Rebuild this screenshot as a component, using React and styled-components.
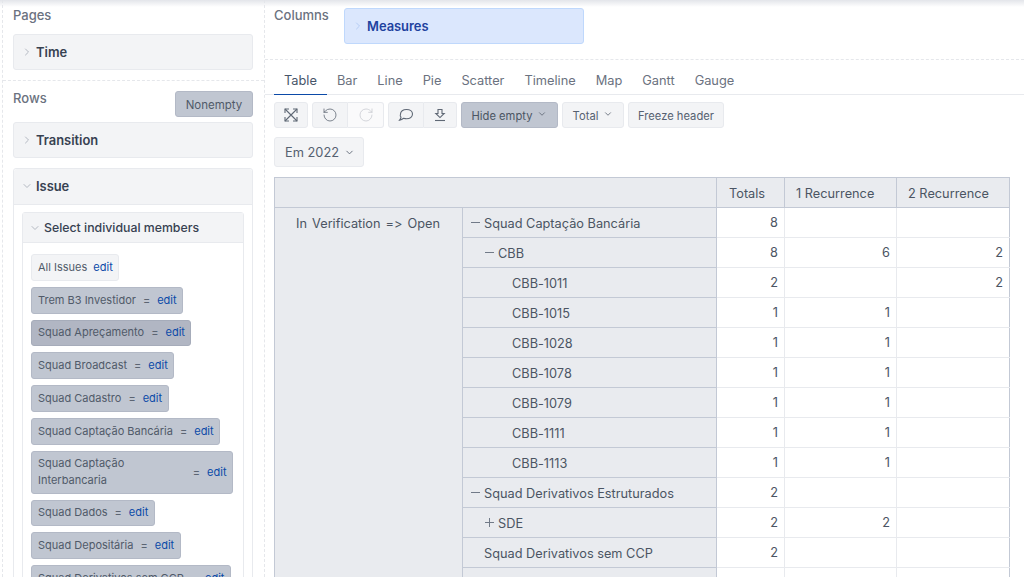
import React from 'react';
import styled, { createGlobalStyle } from 'styled-components';
import { ChevronRight, ChevronDown, RotateCcw, RotateCw } from 'lucide-react';

const GlobalStyle = createGlobalStyle`
  html, body {
    margin: 0;
    padding: 0;
    background: #fff;
    font-family: Inter, "Noto Sans", sans-serif;
    font-variant-ligatures: none;
    font-feature-settings: "liga" 0, "calt" 0;
    color: #4b5563;
  }
  * { box-sizing: border-box; }
`;

const Page = styled.div`
  position: relative;
  display: flex;
  width: 1024px;
  height: 577px;
  overflow: hidden;
  background: #fff;
`;

const TopShadow = styled.div`
  position: absolute;
  top: 0;
  left: 0;
  right: 0;
  height: 7px;
  background: linear-gradient(#e3e5ea, #ffffff00);
`;

const Sidebar = styled.aside`
  flex: none;
  width: 263px;
  margin-left: 2px;
  border-left: 1px dashed #e5e7eb;
  border-right: 1px dashed #e5e7eb;
`;

const Section = styled.section`
  padding: ${(p) => p.$pad || '8px 11px 10px 10px'};
  border-bottom: ${(p) => (p.$line ? '1px dashed #e5e7eb' : 'none')};
`;

const SectionHead = styled.div`
  display: flex;
  justify-content: space-between;
  align-items: flex-start;
  height: 27px;
  margin-bottom: 4px;
`;

const Label = styled.div`
  font-size: 13px;
  line-height: 14px;
  color: #6b7280;
  font-weight: 500;
`;

const Dim = styled.div`
  display: flex;
  align-items: center;
  gap: 3px;
  height: ${(p) => p.$h || 36}px;
  margin-top: ${(p) => p.$mt || 0}px;
  margin-bottom: ${(p) => p.$mb || 0}px;
  padding-left: 7px;
  background: ${(p) => (p.$blue ? '#dbe7fd' : '#f3f4f6')};
  border: 1px solid ${(p) => (p.$blue ? '#bfd8fc' : '#e8eaee')};
  border-radius: 3px;
  font-size: 12.9px;
  font-weight: 600;
  color: ${(p) => (p.$blue ? '#1e429f' : '#374151')};
  svg { color: ${(p) => (p.$blue ? '#b6cdf5' : '#b4b9c2')}; flex: none; }
`;

const IssueCard = styled.div`
  border: 1px solid #e8eaee;
  border-radius: 3px;
  height: 500px;
`;

const IssueHead = styled(Dim)`
  border: none;
  border-bottom: 1px solid #e8eaee;
  border-radius: 3px 3px 0 0;
  padding-bottom: 1px;
`;

const Members = styled.div`
  margin: 7px 8px 0;
  border: 1px solid #e8eaee;
  border-radius: 3px;
  height: 500px;
`;

const MembersHead = styled.div`
  display: flex;
  align-items: center;
  gap: 3px;
  height: 30px;
  padding-left: 6px;
  background: #f3f4f6;
  border-bottom: 1px solid #e8eaee;
  font-size: 12.3px;
  font-weight: 500;
  color: #374151;
  svg { color: #b4b9c2; flex: none; }
`;

const MemberList = styled.div`
  display: flex;
  flex-direction: column;
  align-items: flex-start;
  gap: 6px;
  padding: 11px 8px;
`;

const Chip = styled.div`
  display: flex;
  align-items: center;
  min-height: 26.75px;
  width: ${(p) => (p.$wide ? '202px' : 'auto')};
  padding: 3.5px 5.5px 3.5px 6px;
  border: 1px solid ${(p) => (p.$plain ? '#e8eaee' : p.$dark ? '#a6acba' : '#b3b9c6')};
  border-radius: 3px;
  background: ${(p) => (p.$plain ? '#f3f4f6' : p.$dark ? '#b1b6c3' : '#c0c6d1')};
  font-size: 11px;
  line-height: 17px;
  color: #505a69;
`;

const ChipName = styled.span`
  flex: none;
  max-width: ${(p) => (p.$wide ? '120px' : 'none')};
`;

const Eq = styled.span`
  margin: ${(p) => (p.$push ? '0 7px 0 auto' : '0 7px')};
  color: #5b6472;
`;

const Edit = styled.a`
  color: #0b4aa8;
  margin-left: ${(p) => (p.$gap ? '6px' : '0')};
`;

const Nonempty = styled.button`
  width: 78px;
  height: 26px;
  padding: 1px 0 0;
  font: inherit;
  font-size: 11.5px;
  color: #505a69;
  background: #c0c6d1;
  border: 1px solid #b3b9c6;
  border-radius: 3px;
`;

const Main = styled.main`
  flex: 1;
  min-width: 0;
`;

const ColumnsBar = styled.div`
  display: flex;
  gap: 14px;
  height: 60px;
  padding: 8px 9px 0;
  border-bottom: 1px dashed #e5e7eb;
`;

const ColumnsLabel = styled(Label)`
  width: 56px;
`;

const Measures = styled(Dim)`
  width: 240px;
`;

const Tabs = styled.nav`
  display: flex;
  height: 35px;
  padding: 0 9px;
  border-bottom: 1px solid #e8eaee;
`;

const Tab = styled.div`
  height: 35px;
  padding: 13px 10px 0;
  font-size: 12.8px;
  line-height: 16px;
  color: ${(p) => (p.$on ? '#475569' : '#6b7280')};
  border-bottom: 1px solid ${(p) => (p.$on ? '#0b4aa8' : 'transparent')};
`;

const Toolbar = styled.div`
  display: flex;
  gap: 4px;
  padding: 7px 9px 0;
`;

const Group = styled.div`
  display: flex;
`;

const ToolButton = styled.button`
  display: flex;
  align-items: center;
  justify-content: center;
  gap: 5px;
  height: 26px;
  width: ${(p) => p.$w}px;
  padding: ${(p) => (p.$text ? '1px 0 0' : '0')};
  font: inherit;
  font-size: 11.2px;
  white-space: nowrap;
  color: ${(p) => (p.$on ? '#4b5563' : '#566171')};
  background: ${(p) => (p.$on ? '#c0c6d1' : p.$off ? '#fafafb' : '#f3f4f6')};
  border: 1px solid ${(p) => (p.$on ? '#b3b9c6' : '#e8eaee')};
  border-radius: ${(p) => (p.$first ? '3px 0 0 3px' : p.$last ? '0 3px 3px 0' : '3px')};
  border-left-width: ${(p) => (p.$last ? 0 : 1)}px;
  svg { flex: none; color: ${(p) => (p.$off ? '#c9ccd2' : '#5f6875')}; }
`;

const Caret = styled(ChevronDown)`
  transform: translateY(-2px);
`;

const YearButton = styled(ToolButton)`
  gap: 5px;
  height: 30px;
  margin: 9px 0 10px 9px;
  padding-left: 2px;
  font-size: 12.8px;
`;

const Grid = styled.table`
  width: 736px;
  margin-left: 9px;
  border-collapse: collapse;
  table-layout: fixed;
  border-top: 1px solid #c3c9d5;
  border-left: 1px solid #c3c9d5;
  border-right: 1px solid #c3c9d5;
  font-size: 12.75px;
  color: #4b5563;
`;

const HeadCell = styled.th`
  height: 30px;
  padding: 1px 0 0 ${(p) => p.$pl || 0}px;
  background: #e9ebef;
  font-weight: 400;
  text-align: left;
  border-left: 1px solid #c3c9d5;
  border-bottom: 1px solid #c3c9d5;
`;

const GroupCell = styled.td`
  vertical-align: top;
  padding: 8px 0 0 21px;
  background: #e9ebef;
  border-bottom: 1px solid #c3c9d5;
  line-height: 16px;
  word-spacing: 1.5px;
`;

const RowCell = styled.td`
  height: 30px;
  padding: 1px 0 0;
  background: #e9ebef;
  border-left: 1px solid #c3c9d5;
  border-bottom: 1px solid #c3c9d5;
`;

const RowName = styled.div`
  display: flex;
  align-items: center;
  padding-left: ${(p) => 8 + p.$level * 14}px;
`;

const Toggle = styled.span`
  display: inline-flex;
  width: 13px;
  flex: none;
  transform: translateY(-1px);
  svg { display: block; color: #717a88; }
`;

const Value = styled.td`
  height: 30px;
  padding: 0 6px 0 0;
  text-align: right;
  background: #fff;
  border-left: 1px solid ${(p) => (p.$first ? '#c3c9d5' : '#e8eaee')};
  border-bottom: 1px solid #e8eaee;
`;

const FullScreen = () => (
  <svg width="14" height="14" viewBox="0 0 14 14" fill="none" stroke="currentColor" strokeWidth="1.1">
    <path d="M1 1l12 12M13 1L1 13" />
    <path d="M1 5V1h4M9 1h4v4M1 9v4h4M13 9v4H9" />
  </svg>
);

const Download = () => (
  <svg width="14" height="14" viewBox="0 0 14 14" fill="none" stroke="currentColor" strokeWidth="1.1">
    <path d="M5 1.500h4v4h2.200L7 9.600 2.800 5.500H5z" />
    <path d="M2 12.500h10" />
  </svg>
);

const Comment = () => (
  <svg width="16" height="15" viewBox="0 0 16 15" fill="none" stroke="currentColor" strokeWidth="1.1">
    <path d="M8.500 1.500c3.500 0 6 1.900 6 4.600s-2.600 4.700-6 4.700c-1 0-2-.2-2.900-.5-1 .8-2.300 1.600-4 1.900.7-.9 1.300-2 1.400-3.100C1.700 8.300 2 7.400 2.500 6.100 2.500 3.400 5 1.500 8.500 1.500z" />
  </svg>
);

const Minus = () => (
  <svg width="9" height="9" viewBox="0 0 9 9" stroke="currentColor" strokeWidth="1">
    <path d="M0 4.500h9" />
  </svg>
);

const Plus = () => (
  <svg width="9" height="9" viewBox="0 0 9 9" stroke="currentColor" strokeWidth="1">
    <path d="M0 4.500h9M4.500 0v9" />
  </svg>
);

const members = [
  { name: 'Trem B3 Investidor' },
  { name: 'Squad Apreçamento', dark: true },
  { name: 'Squad Broadcast' },
  { name: 'Squad Cadastro' },
  { name: 'Squad Captação Bancária' },
  { name: 'Squad Captação Interbancaria', wide: true },
  { name: 'Squad Dados' },
  { name: 'Squad Depositária' },
  { name: 'Squad Derivativos sem CCP' },
];

const rows = [
  { name: 'Squad Captação Bancária', level: 0, mark: 'minus', v: [8, '', ''] },
  { name: 'CBB', level: 1, mark: 'minus', v: [8, 6, 2] },
  { name: 'CBB-1011', level: 2, v: [2, '', 2] },
  { name: 'CBB-1015', level: 2, v: [1, 1, ''] },
  { name: 'CBB-1028', level: 2, v: [1, 1, ''] },
  { name: 'CBB-1078', level: 2, v: [1, 1, ''] },
  { name: 'CBB-1079', level: 2, v: [1, 1, ''] },
  { name: 'CBB-1111', level: 2, v: [1, 1, ''] },
  { name: 'CBB-1113', level: 2, v: [1, 1, ''] },
  { name: 'Squad Derivativos Estruturados', level: 0, mark: 'minus', v: [2, '', ''] },
  { name: 'SDE', level: 1, mark: 'plus', v: [2, 2, ''] },
  { name: 'Squad Derivativos sem CCP', level: 0, v: [2, '', ''] },
  { name: '', level: 0, v: ['', '', ''] },
];

const tabs = ['Table', 'Bar', 'Line', 'Pie', 'Scatter', 'Timeline', 'Map', 'Gantt', 'Gauge'];

const App = () => (
  <Page>
    <GlobalStyle />
    <Sidebar>
      <Section $line>
        <Label>Pages</Label>
        <Dim $mt={12}>
          <ChevronRight size={12} /> Time
        </Dim>
      </Section>
      <Section $pad="10px 11px 0 10px">
        <SectionHead>
          <Label>Rows</Label>
          <Nonempty>Nonempty</Nonempty>
        </SectionHead>
        <Dim $mb={10}>
          <ChevronRight size={12} /> Transition
        </Dim>
        <IssueCard>
          <IssueHead>
            <ChevronDown size={12} /> Issue
          </IssueHead>
          <Members>
            <MembersHead>
              <ChevronDown size={12} /> Select individual members
            </MembersHead>
            <MemberList>
              <Chip $plain>
                All Issues<Edit $gap>edit</Edit>
              </Chip>
              {members.map((m) => (
                <Chip key={m.name} $dark={m.dark} $wide={m.wide}>
                  <ChipName $wide={m.wide}>{m.name}</ChipName>
                  <Eq $push={m.wide}>=</Eq>
                  <Edit>edit</Edit>
                </Chip>
              ))}
            </MemberList>
          </Members>
        </IssueCard>
      </Section>
    </Sidebar>
    <Main>
      <ColumnsBar>
        <ColumnsLabel>Columns</ColumnsLabel>
        <Measures $blue>
          <ChevronRight size={12} /> Measures
        </Measures>
      </ColumnsBar>
      <Tabs>
        {tabs.map((t) => (
          <Tab key={t} $on={t === 'Table'}>
            {t}
          </Tab>
        ))}
      </Tabs>
      <Toolbar>
        <ToolButton $w={34}>
          <FullScreen />
        </ToolButton>
        <Group>
          <ToolButton $w={36} $first>
            <RotateCcw size={16} strokeWidth={1.2} />
          </ToolButton>
          <ToolButton $w={36} $last $off>
            <RotateCw size={16} strokeWidth={1.2} />
          </ToolButton>
        </Group>
        <Group>
          <ToolButton $w={36} $first>
            <Comment />
          </ToolButton>
          <ToolButton $w={33} $last>
            <Download />
          </ToolButton>
        </Group>
        <ToolButton $w={97} $text $on>
          Hide empty <Caret size={10} />
        </ToolButton>
        <ToolButton $w={62} $text>
          Total <Caret size={10} />
        </ToolButton>
        <ToolButton $w={96} $text>
          Freeze header
        </ToolButton>
      </Toolbar>
      <YearButton $w={90} $text>
        Em 2022 <ChevronDown size={11} />
      </YearButton>
      <Grid>
        <colgroup>
          <col style={{ width: 188 }} />
          <col style={{ width: 254 }} />
          <col style={{ width: 68 }} />
          <col style={{ width: 112 }} />
          <col style={{ width: 113 }} />
        </colgroup>
        <thead>
          <tr>
            <HeadCell colSpan={2} />
            <HeadCell $pl={12}>Totals</HeadCell>
            <HeadCell $pl={11}>1 Recurrence</HeadCell>
            <HeadCell $pl={11}>2 Recurrence</HeadCell>
          </tr>
        </thead>
        <tbody>
          {rows.map((r, i) => (
            <tr key={i}>
              {i === 0 && <GroupCell rowSpan={rows.length}>In Verification =&gt; Open</GroupCell>}
              <RowCell>
                <RowName $level={r.level}>
                  <Toggle>{r.mark === 'minus' ? <Minus /> : r.mark === 'plus' ? <Plus /> : null}</Toggle>
                  {r.name}
                </RowName>
              </RowCell>
              {r.v.map((x, j) => (
                <Value key={j} $first={j === 0}>
                  {x}
                </Value>
              ))}
            </tr>
          ))}
        </tbody>
      </Grid>
    </Main>
    <TopShadow />
  </Page>
);

export default App;
